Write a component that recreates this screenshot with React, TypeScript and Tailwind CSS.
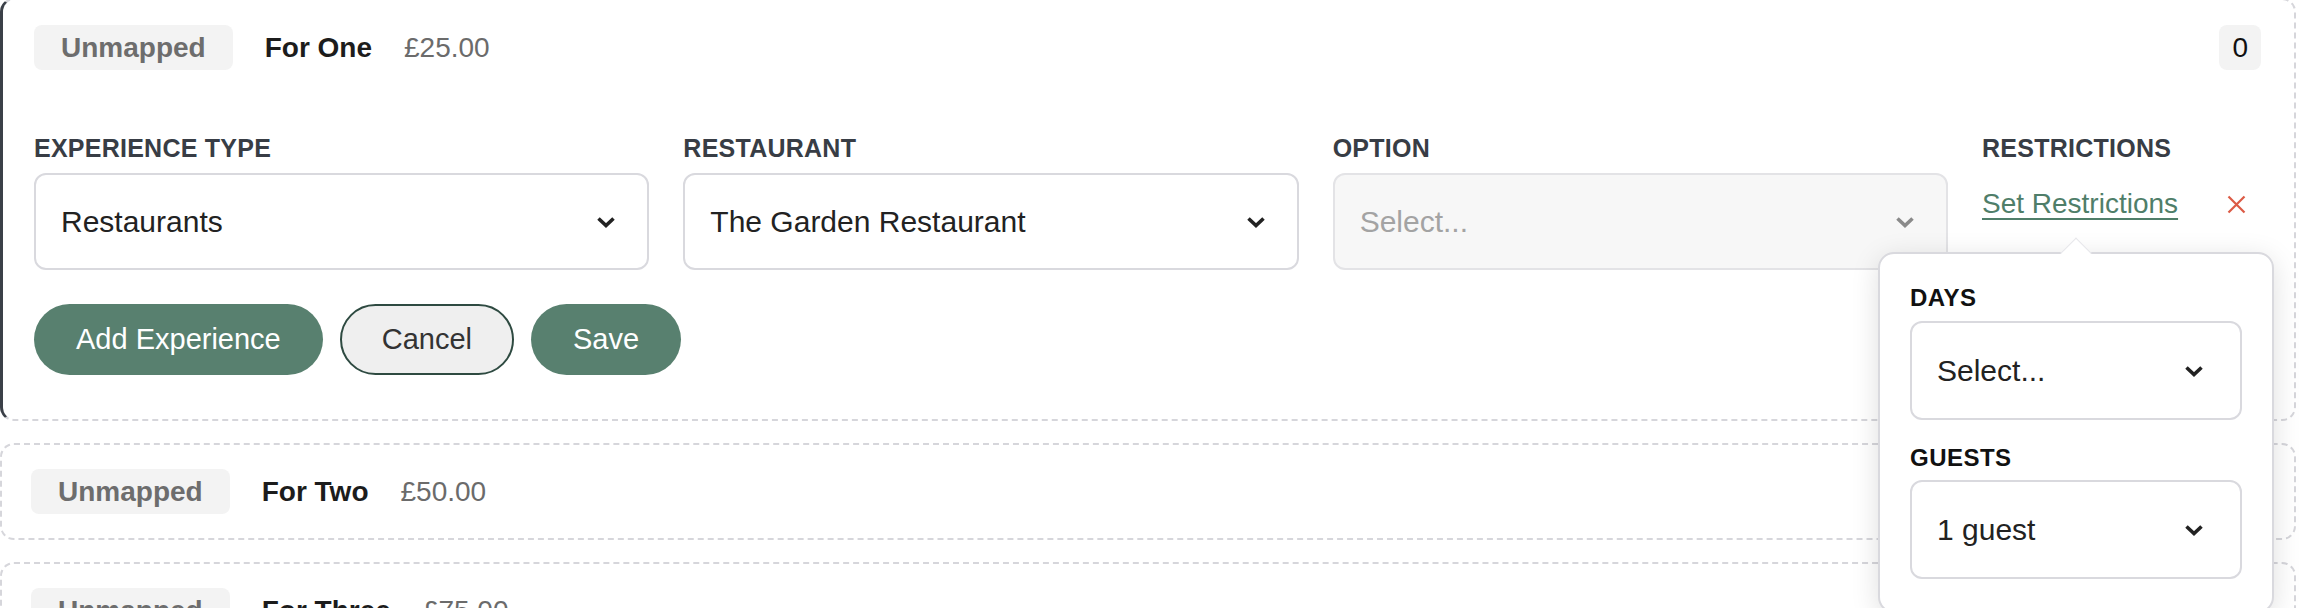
import React, { FC } from "react"

const Chevron: FC<{ className?: string }> = ({ className }) => (
  <svg width="20" height="12" viewBox="0 0 20 12" className={className} fill="none">
    <path d="M2.5 2.5 L10 9.5 L17.5 2.5" stroke="currentColor" strokeWidth="3.6" strokeLinejoin="miter" />
  </svg>
)

const Badge: FC<{ children: React.ReactNode }> = ({ children }) => (
  <span className="bg-[#f3f3f3] text-[#6d6d6d] font-bold text-[28px] leading-[33px] px-[27px] py-[6px] rounded-[8px]">
    {children}
  </span>
)

interface HeaderProps {
  name: string
  price: string
}

const Header: FC<HeaderProps> = ({ name, price }) => (
  <div className="flex items-center gap-[32px]">
    <Badge>Unmapped</Badge>
    <span className="font-bold text-[28px] text-[#1c1c1c]">{name}</span>
    <span className="text-[28px] text-[#6b6b6b]">{price}</span>
  </div>
)

interface SelectProps {
  value: string
  disabled?: boolean
  placeholder?: boolean
  compact?: boolean
}

const SelectBox: FC<SelectProps> = ({ value, disabled, placeholder, compact }) => (
  <div
    className={
      "flex items-center justify-between rounded-[12px] border-2 " +
      (compact ? "h-[99px] pl-[25px] pr-[36px] " : "h-[97px] pl-[25px] pr-[31px] ") +
      (disabled ? "bg-[#f7f7f7] border-[#e3e3e6]" : "bg-white border-[#d9d9de]")
    }
  >
    <span className={"text-[30px] " + (placeholder ? "text-[#a3a3a3]" : "text-[#222]")}>{value}</span>
    <Chevron className={disabled ? "text-[#8a8a8a]" : "text-[#222]"} />
  </div>
)

const Label: FC<{ children: React.ReactNode }> = ({ children }) => (
  <div className="font-bold text-[25px] leading-[30px] tracking-[0.01em] text-[#383d45] uppercase">
    {children}
  </div>
)

const RestrictionsPopover = () => (
  <div className="absolute left-[1878px] top-[252px] w-[396px] bg-white border-2 border-[#d9d9de] rounded-[16px] shadow-[0_6px_28px_rgba(0,0,0,0.13)] px-[30px] pt-[29px] pb-[32px]">
    <div className="absolute -top-[12px] left-1/2 -ml-[11px] w-[22px] h-[22px] bg-white rotate-45 border-l border-t border-[#e6e6ea]" />
    <div className="relative font-bold text-[24px] leading-[30px] tracking-[0.02em] text-[#111]">DAYS</div>
    <div className="mt-[8px]">
      <SelectBox value="Select..." compact />
    </div>
    <div className="mt-[23px] font-bold text-[24px] leading-[30px] tracking-[0.02em] text-[#111]">GUESTS</div>
    <div className="mt-[7px]">
      <SelectBox value="1 guest" compact />
    </div>
  </div>
)

const App = () => {
  return (
    <div className="relative w-[2300px] h-[608px] overflow-hidden bg-white font-['Liberation_Sans',Arial,sans-serif]">
      <div className="flex flex-col gap-[22px] w-[2296px] -mt-[2px]">
        <div className="rounded-[14px] border-2 border-dashed border-[#d6d6db] border-l-[3px] border-l-[#3b4048] [border-left-style:solid] pl-[31px] pr-[33px] pt-[25px] pb-[44px]">
          <div className="flex items-center justify-between">
            <Header name="For One" price="£25.00" />
            <span className="bg-[#f3f3f3] text-[#111] text-[28px] leading-[33px] px-[13px] py-[6px] rounded-[8px]">0</span>
          </div>

          <div className="mt-[63px] grid grid-cols-[1fr_1fr_1fr_279px] gap-x-[34px]">
            <div>
              <Label>Experience Type</Label>
              <div className="mt-[10px]">
                <SelectBox value="Restaurants" />
              </div>
            </div>
            <div>
              <Label>Restaurant</Label>
              <div className="mt-[10px]">
                <SelectBox value="The Garden Restaurant" />
              </div>
            </div>
            <div>
              <Label>Option</Label>
              <div className="mt-[10px]">
                <SelectBox value="Select..." disabled placeholder />
              </div>
            </div>
            <div>
              <Label>Restrictions</Label>
              <div className="mt-[24px] flex items-center">
                <span className="text-[28px] leading-[34px] text-[#4f7e69] underline decoration-2 underline-offset-[5px]">
                  Set Restrictions
                </span>
                <svg width="19" height="19" viewBox="0 0 19 19" className="ml-auto mr-[15px]" fill="none">
                  <path d="M1.5 1.5 L17.5 17.5 M17.5 1.5 L1.5 17.5" stroke="#dc5a45" strokeWidth="2.2" />
                </svg>
              </div>
            </div>
          </div>

          <div className="mt-[34px] flex items-center gap-[17px]">
            <button className="h-[71px] px-[42px] rounded-full bg-[#58806f] text-white text-[29px]">Add Experience</button>
            <button className="h-[71px] px-[40px] rounded-full bg-[#efefef] border-2 border-[#2e4a41] text-[#333] text-[29px]">Cancel</button>
            <button className="h-[71px] px-[42px] rounded-full bg-[#58806f] text-white text-[29px]">Save</button>
          </div>
        </div>

        <div className="rounded-[14px] border-2 border-dashed border-[#d6d6db] pl-[29px] pr-[33px] py-[24px]">
          <Header name="For Two" price="£50.00" />
        </div>

        <div className="rounded-[14px] border-2 border-dashed border-[#d6d6db] pl-[29px] pr-[33px] py-[24px]">
          <Header name="For Three" price="£75.00" />
        </div>
      </div>

      <RestrictionsPopover />
    </div>
  )
}

export default App
